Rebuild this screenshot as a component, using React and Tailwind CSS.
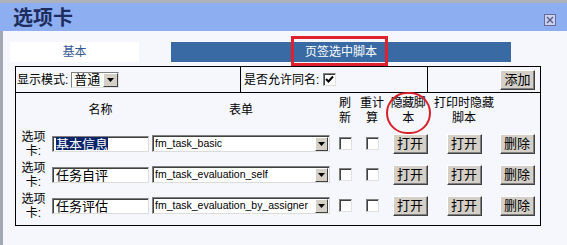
import React from "react";

const Arrow = ({ w = "w-[15px]" }) => (
  <span className={`${w} h-[14px] bg-[#d4d0c8] border border-t-white border-l-white border-r-[#404040] border-b-[#404040] flex items-center justify-center shrink-0`}>
    <svg width="7" height="4" viewBox="0 0 7 4">
      <path d="M0 0h7L3.5 4z" fill="#000" />
    </svg>
  </span>
);

const Check = ({ checked }) => (
  <span className="w-[13px] h-[13px] bg-white border border-t-[#808080] border-l-[#808080] border-r-[#e0e0e0] border-b-[#e0e0e0] shadow-[inset_1px_1px_0_#404040] flex items-center justify-center">
    {checked && (
      <svg width="9" height="9" viewBox="0 0 9 9">
        <path d="M1 4l2.5 2.5L8 1.5" stroke="#000" strokeWidth="2" fill="none" />
      </svg>
    )}
  </span>
);

const Btn = ({ children }) => (
  <span className="w-[35px] h-[20px] bg-[#d4d0c8] border border-t-white border-l-white border-r-[#404040] border-b-[#404040] shadow-[inset_-1px_-1px_0_#808080] flex items-center justify-center text-[13px] leading-none">
    {children}
  </span>
);

const rows = [
  { name: "基本信息", form: "fm_task_basic", sel: true },
  { name: "任务自评", form: "fm_task_evaluation_self" },
  { name: "任务评估", form: "fm_task_evaluation_by_assigner" },
];

const cols = "grid grid-cols-[35px_99px_182px_26px_28px_44px_68px_38px]";

export default function App() {
  return (
    <div className="w-[567px] h-[245px] relative overflow-hidden bg-[#f5f7fc] font-['Liberation_Sans','Noto_Sans_CJK_SC',sans-serif] text-[12px] text-black">
      <div className="h-[3px] bg-[#aeb2bd]" />
      <div className="h-[28px] bg-[#8eaef2] flex items-center justify-between pl-[13px] pr-[11px]">
        <span className="text-[20px] font-bold text-[#1d2d5e] leading-none font-['Noto_Sans_CJK_SC',sans-serif]">
          选项卡
        </span>
        <span className="mt-[5px] w-[12px] h-[12px] border border-[#6a6a96] bg-[#c9d3f0] flex items-center justify-center">
          <svg width="8" height="8" viewBox="0 0 8 8">
            <path d="M1 1l6 6M7 1L1 7" stroke="#5a5a8a" strokeWidth="1.4" />
          </svg>
        </span>
      </div>

      <div className="h-[214px] border-l-[3px] border-[#a3a7b3] pl-[7px] pt-[11px]">
        <div className="flex h-[20px] gap-[32px]">
          <div className="w-[129px] bg-white flex items-center justify-center text-[#35598f]">
            基本
          </div>
          <div className="w-[340px] bg-[#3a6aa3] flex items-center justify-center text-white">
            页签选中脚本
          </div>
        </div>

        <div className="mt-[4px] ml-[5px] w-[526px] h-[160px] border border-black">
          <div className="flex h-[26px] border-b border-black">
            <div className="w-[225px] border-r border-black flex items-center pl-[1px] gap-[3px]">
              <span>显示模式:</span>
              <span className="w-[48px] h-[16px] bg-white border border-t-[#808080] border-l-[#808080] border-r-[#e0e0e0] border-b-[#e0e0e0] flex items-center justify-between pl-[2px] text-[13px] leading-none">
                普通
                <Arrow />
              </span>
            </div>
            <div className="w-[187px] border-r border-black flex items-center pl-[3px] gap-[4px]">
              <span>是否允许同名:</span>
              <Check checked />
            </div>
            <div className="flex-1 flex items-center justify-end pr-[5px]">
              <Btn>添加</Btn>
            </div>
          </div>

          <div className={`${cols} h-[35px] items-center text-center leading-[15px]`}>
            <span />
            <span>名称</span>
            <span>表单</span>
            <span>刷<br />新</span>
            <span>重计<br />算</span>
            <span className="tracking-[-0.5px]">隐藏脚<br />本</span>
            <span>打印时隐藏<br />脚本</span>
            <span />
          </div>

          {rows.map((r) => (
            <div key={r.name} className={`${cols} h-[31px] items-center`}>
              <span className="text-center leading-[14px]">选项<br />卡:</span>
              <span className="h-[16px] w-[97px] ml-[1px] bg-white border border-t-[#808080] border-l-[#808080] border-r-[#dcdcdc] border-b-[#dcdcdc] shadow-[inset_1px_1px_0_#404040] flex items-center pl-[3px] text-[13px] leading-none font-['Noto_Sans_CJK_SC',sans-serif]">
                <span className={r.sel ? "bg-[#0a246a] text-white" : ""}>{r.name}</span>
              </span>
              <span className="h-[17px] w-[178px] ml-[2px] bg-white border border-t-[#808080] border-l-[#808080] border-r-[#dcdcdc] border-b-[#dcdcdc] shadow-[inset_1px_1px_0_#404040] flex items-center justify-between pl-[2px] pr-[1px] text-[10.5px] whitespace-nowrap">
                <span>{r.form}</span>
                <Arrow w="w-[13px]" />
              </span>
              <span className="flex justify-center"><Check /></span>
              <span className="flex justify-center"><Check /></span>
              <span className="flex justify-center pl-[4px]"><Btn>打开</Btn></span>
              <span className="flex justify-center"><Btn>打开</Btn></span>
              <span className="flex justify-center"><Btn>删除</Btn></span>
            </div>
          ))}
        </div>
      </div>

      <div className="absolute left-[291px] top-[36px] w-[97px] h-[30px] border-[3px] border-[#e0202c]" />
      <div className="absolute left-[386px] top-[92px] w-[45px] h-[42px] rounded-full border-2 border-[#d8202a]" />
    </div>
  );
}
